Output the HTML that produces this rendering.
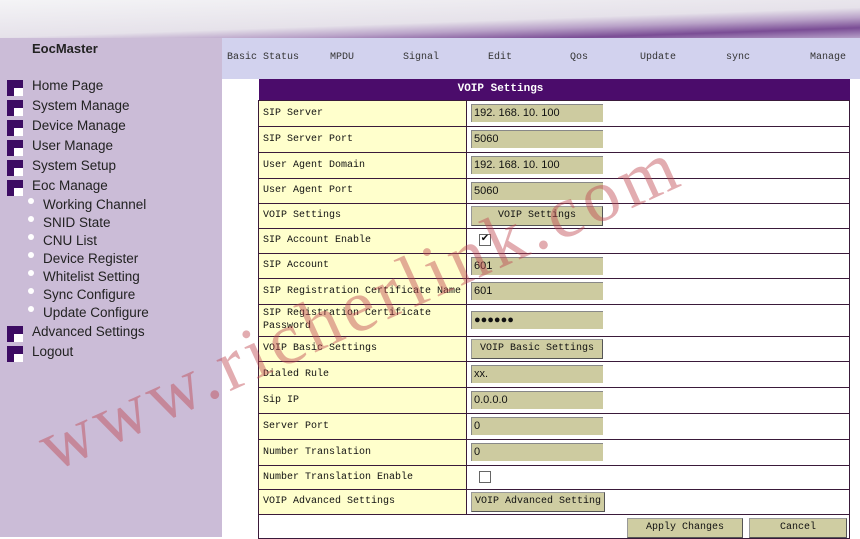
<!DOCTYPE html>
<html><head><meta charset="utf-8"><style>
*{margin:0;padding:0;box-sizing:border-box}
body{width:860px;height:537px;overflow:hidden;background:#fff;position:relative;font-family:"Liberation Sans",sans-serif}
#top{position:absolute;left:0;top:0;width:860px;height:38px;background:linear-gradient(178deg,#f4f4f6 0%,#e6e2ea 55%,#b9a2c8 70%,#7a4d95 85%,#b6a0c8 100%)}
#side{position:absolute;left:0;top:38px;width:222px;height:499px;background:#cbbcd7}
#side .t{position:absolute;left:32px;top:3px;font-weight:bold;font-size:13px;color:#222}
.m{position:absolute;left:32px;font-size:13.5px;color:#222}
.ic{position:absolute;left:7px;width:16px;height:16px;background:#3d0c63}
.ic:after{content:"";position:absolute;right:0;bottom:0;width:9px;height:8px;background:#fff}
.s{position:absolute;left:43px;font-size:13.5px;color:#222}
.d{position:absolute;left:28px;width:6px;height:6px;border-radius:50%;background:#fff}
#nav{position:absolute;left:222px;top:38px;width:638px;height:41px;background:#d2d2ee;font-family:"Liberation Mono",monospace;font-size:10px;color:#333}
#nav span{position:absolute;top:14px}
#tb{position:absolute;left:258px;top:79px;width:591px;border-collapse:collapse;table-layout:fixed;font-family:"Liberation Mono",monospace;font-size:10px;color:#111}
#tb td{border:1px solid #3a1a3a;padding:0 4px;vertical-align:middle;white-space:nowrap;overflow:hidden}
#tb td.l{background:#ffffcc}
#tb th{background:#4b0c6b;color:#fff;height:21px;font-size:11px;text-align:center;padding-right:107px}
.in{display:inline-block;width:132px;height:18px;background:#cdcba0;border-top:1px solid #888;border-left:1px solid #888;font-family:"Liberation Sans",sans-serif;font-size:11px;line-height:17px;padding-left:2px;vertical-align:middle}
.bt{display:inline-block;height:20px;background:#cfcda2;border:1px solid #999;border-right-color:#555;border-bottom-color:#555;text-align:center;line-height:18px;font-size:10px;white-space:nowrap;vertical-align:middle}
.cb{display:inline-block;width:12px;height:12px;border:1px solid #666;margin-left:8px;background:#fff;font-size:10px;line-height:10px;text-align:center;vertical-align:middle}
#wm{position:absolute;left:58px;top:410px;transform-origin:0 100%;transform:rotate(-24.5deg);font-family:"Liberation Serif",serif;font-size:74px;color:rgba(190,70,80,.45);letter-spacing:5px;white-space:nowrap;line-height:74px}
</style></head><body>
<div id="top"></div>
<div id="side">
<div class="t">EocMaster</div>
<div class="ic" style="top:42px"></div><div class="m" style="top:40px">Home Page</div>
<div class="ic" style="top:62px"></div><div class="m" style="top:60px">System Manage</div>
<div class="ic" style="top:82px"></div><div class="m" style="top:80px">Device Manage</div>
<div class="ic" style="top:102px"></div><div class="m" style="top:100px">User Manage</div>
<div class="ic" style="top:122px"></div><div class="m" style="top:120px">System Setup</div>
<div class="ic" style="top:142px"></div><div class="m" style="top:140px">Eoc Manage</div>
<div class="d" style="top:160px"></div><div class="s" style="top:159px">Working Channel</div>
<div class="d" style="top:178px"></div><div class="s" style="top:177px">SNID State</div>
<div class="d" style="top:196px"></div><div class="s" style="top:195px">CNU List</div>
<div class="d" style="top:214px"></div><div class="s" style="top:213px">Device Register</div>
<div class="d" style="top:232px"></div><div class="s" style="top:231px">Whitelist Setting</div>
<div class="d" style="top:250px"></div><div class="s" style="top:249px">Sync Configure</div>
<div class="d" style="top:268px"></div><div class="s" style="top:267px">Update Configure</div>
<div class="ic" style="top:288px"></div><div class="m" style="top:286px">Advanced Settings</div>
<div class="ic" style="top:308px"></div><div class="m" style="top:306px">Logout</div>
</div>
<div id="nav">
<span style="left:5px">Basic Status</span><span style="left:108px">MPDU</span><span style="left:181px">Signal</span><span style="left:266px">Edit</span><span style="left:348px">Qos</span><span style="left:418px">Update</span><span style="left:504px">sync</span><span style="left:588px">Manage</span>
</div>
<table id="tb">
<colgroup><col style="width:208px"><col style="width:383px"></colgroup>
<tr><th colspan="2">VOIP Settings</th></tr>
<tr style="height:26px"><td class="l">SIP Server</td><td><span class="in">192. 168. 10. 100</span></td></tr>
<tr style="height:26px"><td class="l">SIP Server Port</td><td><span class="in">5060</span></td></tr>
<tr style="height:26px"><td class="l">User Agent Domain</td><td><span class="in">192. 168. 10. 100</span></td></tr>
<tr style="height:25px"><td class="l">User Agent Port</td><td><span class="in">5060</span></td></tr>
<tr style="height:25px"><td class="l">VOIP Settings</td><td><span class="bt" style="width:132px">VOIP Settings</span></td></tr>
<tr style="height:25px"><td class="l">SIP Account Enable</td><td><span class="cb">✔</span></td></tr>
<tr style="height:25px"><td class="l">SIP Account</td><td><span class="in">601</span></td></tr>
<tr style="height:26px"><td class="l">SIP Registration Certificate Name</td><td><span class="in">601</span></td></tr>
<tr style="height:32px"><td class="l" style="line-height:13px;white-space:normal">SIP Registration Certificate Password</td><td><span class="in">●●●●●●</span></td></tr>
<tr style="height:25px"><td class="l">VOIP Basic Settings</td><td><span class="bt" style="width:132px">VOIP Basic Settings</span></td></tr>
<tr style="height:26px"><td class="l">Dialed Rule</td><td><span class="in">xx.</span></td></tr>
<tr style="height:26px"><td class="l">Sip IP</td><td><span class="in">0.0.0.0</span></td></tr>
<tr style="height:26px"><td class="l">Server Port</td><td><span class="in">0</span></td></tr>
<tr style="height:26px"><td class="l">Number Translation</td><td><span class="in">0</span></td></tr>
<tr style="height:24px"><td class="l">Number Translation Enable</td><td><span class="cb"></span></td></tr>
<tr style="height:25px"><td class="l">VOIP Advanced Settings</td><td><span class="bt" style="width:134px">VOIP Advanced Setting</span></td></tr>
<tr style="height:24px"><td colspan="2" style="text-align:right;padding-right:2px;vertical-align:bottom"><span class="bt" style="width:116px">Apply Changes</span> <span class="bt" style="width:98px">Cancel</span></td></tr>
</table>
<div id="wm">www.richerlink.com</div>
</body></html>
